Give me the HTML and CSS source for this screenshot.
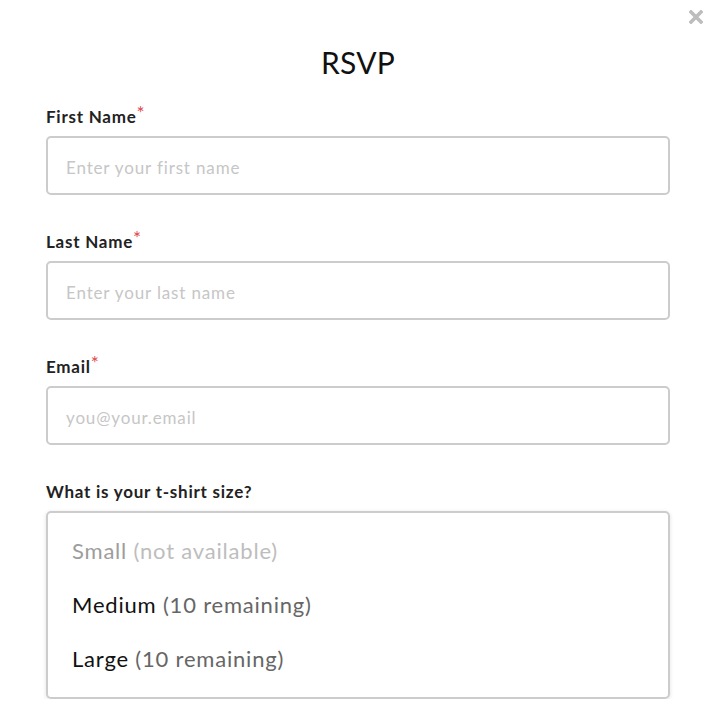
FILE: index.html
```html
<!DOCTYPE html>
<html>
<head>
<meta charset="utf-8">
<link rel="stylesheet" href="styles.css">
</head>
<body>
<div class="modal">
  <button class="close" aria-label="Close">
    <svg width="14" height="14" viewBox="0 0 14 14"><path d="M2 2L12 12M12 2L2 12" stroke="#bdbdbd" stroke-width="3.6" stroke-linecap="square"/></svg>
  </button>
  <h1 class="title">RSVP</h1>
  <form class="form">
    <div class="field">
      <label class="label">First Name<span class="req">*</span></label>
      <input class="input" type="text" placeholder="Enter your first name">
    </div>
    <div class="field">
      <label class="label">Last Name<span class="req">*</span></label>
      <input class="input" type="text" placeholder="Enter your last name">
    </div>
    <div class="field">
      <label class="label">Email<span class="req">*</span></label>
      <input class="input" type="email" placeholder="you@your.email">
    </div>
    <div class="field">
      <label class="label">What is your t-shirt size?</label>
      <div class="select">
        <div class="option disabled">Small <span class="note">(not available)</span></div>
        <div class="option">Medium <span class="note">(10 remaining)</span></div>
        <div class="option">Large <span class="note">(10 remaining)</span></div>
      </div>
    </div>
  </form>
</div>
</body>
</html>
```
FILE: styles.css
```css
html, body {
  margin: 0;
  padding: 0;
  background: #fff;
}
body {
  font-family: Lato, "Open Sans", sans-serif;
  color: #222;
}
.modal {
  position: relative;
  padding: 44px 44px 0 46px;
}
.close {
  position: absolute;
  top: 10px;
  right: 11px;
  border: 0;
  background: none;
  padding: 0;
  width: 14px;
  height: 14px;
  display: block;
}
.close svg { display: block; }
.title {
  margin: 0;
  font-size: 30px;
  line-height: 36px;
  font-weight: 400;
  text-align: center;
  color: #111;
  letter-spacing: 0.2px;
}
.form {
  display: flex;
  flex-direction: column;
  gap: 36px;
  margin-top: 26px;
}
.field {
  display: flex;
  flex-direction: column;
  gap: 8px;
}
.label {
  display: block;
  font-size: 17px;
  line-height: 22px;
  height: 22px;
  font-weight: 700;
  color: #222;
  letter-spacing: 0.75px;
}
.req {
  position: relative;
  top: -3px;
  color: #e0474c;
  font-weight: 400;
  font-size: 19px;
  line-height: 0;
  margin-left: 0;
}
.input {
  box-sizing: border-box;
  height: 59px;
  width: 100%;
  border: 2px solid #cccccc;
  border-radius: 5px;
  padding: 4px 18px 0;
  font-family: Lato, sans-serif;
  font-size: 17px;
  letter-spacing: 0.85px;
  color: #222;
  outline: none;
}
.input::placeholder {
  color: #c6c6c6;
}
.select {
  box-sizing: border-box;
  height: 188px;
  border: 2px solid #cccccc;
  border-radius: 5px;
  padding: 11px 0;
  box-shadow: 0 1px 4px rgba(0,0,0,0.12);
}
.option {
  height: 54px;
  line-height: 54px;
  padding-left: 24px;
  font-size: 22px;
  letter-spacing: 0.8px;
  color: #111;
}
.option .note {
  color: #666;
}
.option.disabled {
  color: #9d9d9d;
}
.option.disabled .note {
  color: #bdbdbd;
}
```
